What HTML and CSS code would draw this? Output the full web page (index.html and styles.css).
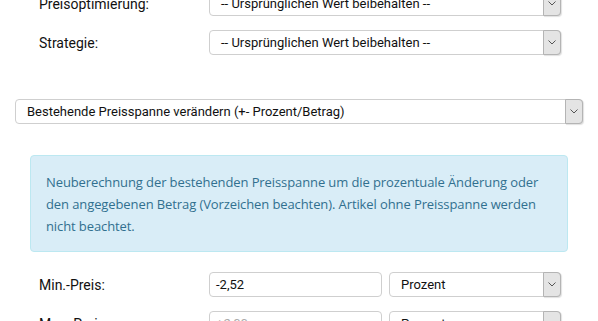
FILE: index.html
```html
<!DOCTYPE html>
<html lang="de">
<head>
<meta charset="utf-8">
<link rel="stylesheet" href="styles.css">
</head>
<body>
<div class="page">
  <div class="group">
    <div class="row">
      <label class="label">Preisoptimierung:</label>
      <div class="select select-mid"><span class="select-text">-- Ursprünglichen Wert beibehalten --</span><span class="arrow"><svg width="8" height="5" viewBox="0 0 8 5"><path d="M0.5 0.5 L4 4 L7.5 0.5" fill="none" stroke="#555" stroke-width="1"/></svg></span></div>
    </div>
    <div class="row">
      <label class="label">Strategie:</label>
      <div class="select select-mid"><span class="select-text">-- Ursprünglichen Wert beibehalten --</span><span class="arrow"><svg width="8" height="5" viewBox="0 0 8 5"><path d="M0.5 0.5 L4 4 L7.5 0.5" fill="none" stroke="#555" stroke-width="1"/></svg></span></div>
    </div>
  </div>

  <div class="select select-wide"><span class="select-text">Bestehende Preisspanne verändern (+- Prozent/Betrag)</span><span class="arrow"><svg width="8" height="5" viewBox="0 0 8 5"><path d="M0.5 0.5 L4 4 L7.5 0.5" fill="none" stroke="#555" stroke-width="1"/></svg></span></div>

  <div class="alert">Neuberechnung der bestehenden Preisspanne um die prozentuale Änderung oder den angegebenen Betrag (Vorzeichen beachten). Artikel ohne Preisspanne werden nicht beachtet.</div>

  <div class="group">
    <div class="row">
      <label class="label">Min.-Preis:</label>
      <div class="input">-2,52</div>
      <div class="select select-small"><span class="select-text">Prozent</span><span class="arrow"><svg width="8" height="5" viewBox="0 0 8 5"><path d="M0.5 0.5 L4 4 L7.5 0.5" fill="none" stroke="#555" stroke-width="1"/></svg></span></div>
    </div>
    <div class="row">
      <label class="label">Max.-Preis:</label>
      <div class="input placeholder">+2,00</div>
      <div class="select select-small"><span class="select-text">Prozent</span><span class="arrow"><svg width="8" height="5" viewBox="0 0 8 5"><path d="M0.5 0.5 L4 4 L7.5 0.5" fill="none" stroke="#555" stroke-width="1"/></svg></span></div>
    </div>
  </div>
</div>
</body>
</html>
```
FILE: styles.css
```css
html, body {
  margin: 0;
  padding: 0;
  background: #fff;
}
.page {
  margin-top: -9px;
  font-family: Roboto, "Liberation Sans", sans-serif;
  color: #111;
}
.group {
  display: flex;
  flex-direction: column;
  gap: 14px;
}
.row {
  display: flex;
  align-items: center;
  height: 25px;
}
.label {
  width: 170px;
  padding-left: 39px;
  font-size: 14px;
  color: #111;
}
.select {
  box-sizing: border-box;
  height: 25px;
  display: flex;
  align-items: center;
  border: 1px solid #cfcfcf;
  border-radius: 4px;
  background: #fff;
  font-size: 13px;
  color: #111;
}
.select-text {
  flex: 1;
  padding-left: 11px;
  white-space: nowrap;
  overflow: hidden;
}
.arrow {
  box-sizing: border-box;
  align-self: stretch;
  width: 18px;
  margin: -1px -1px -1px 0;
  display: flex;
  align-items: center;
  justify-content: center;
  background: #e4e4e4;
  border: 1px solid #b4b4b4;
  border-radius: 0 4px 4px 0;
  box-shadow: 1px 1px 1px rgba(0, 0, 0, 0.12);
}
.select-mid {
  width: 352px;
}
.select-wide {
  width: 568px;
  margin: 44px 0 0 15px;
}
.select-small {
  width: 172px;
  margin-left: 7px;
}
.input {
  box-sizing: border-box;
  width: 173px;
  height: 25px;
  display: flex;
  align-items: center;
  padding-left: 6px;
  border: 1px solid #cfcfcf;
  border-radius: 4px;
  font-size: 13px;
  color: #111;
}
.placeholder {
  color: #aaa;
}
.alert {
  box-sizing: border-box;
  width: 538px;
  margin: 31px 0 20px 30px;
  padding: 15px 15px 14px 15px;
  background: #d9edf7;
  border: 1px solid #bce8f1;
  border-radius: 4px;
  color: #31708f;
  font-family: "Open Sans", sans-serif;
  font-size: 13px;
  letter-spacing: -0.1px;
  line-height: 22px;
}
```
